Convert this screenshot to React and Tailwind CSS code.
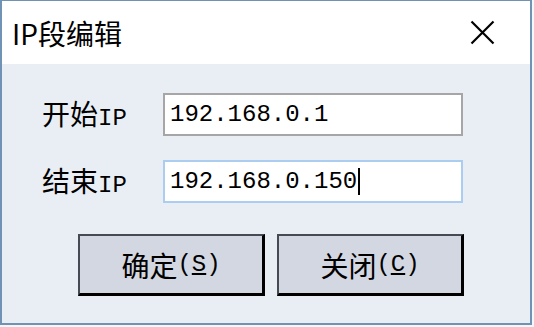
import React from "react";

const cjk = { fontFamily: '"Noto Sans CJK SC", sans-serif' };
const mono = { fontFamily: '"Liberation Mono", "Noto Sans CJK SC", monospace' };

function CloseIcon() {
  return (
    <svg width="25" height="25" viewBox="0 0 25 25" className="text-black">
      <path d="M1.5 1.5 L23.5 23.5 M23.5 1.5 L1.5 23.5" stroke="currentColor" strokeWidth="2.2" fill="none" />
    </svg>
  );
}

function Field({ label, value, active }) {
  return (
    <div className="flex items-center">
      <div className="w-[161px] pl-[40px] flex items-baseline text-black whitespace-nowrap">
        <span className="text-[28px] leading-none" style={cjk}>{label}</span>
        <span className="text-[24px] leading-none" style={mono}>IP</span>
      </div>
      <div
        className={`w-[300px] h-[43px] border-2 bg-white flex items-center pl-[5px] ${
          active ? "border-[#abcdef]" : "border-[#a6a6a6]"
        }`}
      >
        <span className="text-[24px] leading-none text-black" style={mono}>
          {value}
        </span>
        {active && <span className="w-[2px] h-[27px] bg-black ml-[1px]" />}
      </div>
    </div>
  );
}

function Button({ label, hotkey }) {
  return (
    <button className="w-[187px] h-[62px] bg-[#d3d7e1] border-2 border-[#464a52] border-r-[3px] border-b-[3px] border-r-black border-b-black flex items-center justify-center text-black">
      <span className="text-[28px] leading-none" style={cjk}>{label}</span>
      <span className="text-[24px] leading-none" style={mono}>
        (<span className="underline underline-offset-2">{hotkey}</span>)
      </span>
    </button>
  );
}

export default function App() {
  return (
    <div className="w-[534px] h-[327px] bg-[#f4f6f8]">
      <div className="w-[532px] h-[325px] border-[#7093b5] border-l-2 border-t border-r-2 border-b-2 flex flex-col">
        <div className="h-[63px] bg-white flex items-center justify-between pl-[10px] pr-[35px]">
          <span className="text-[28px] text-black leading-none" style={cjk}>IP段编辑</span>
          <CloseIcon />
        </div>
        <div className="flex-1 bg-[#e9eef4] flex flex-col pt-[29px]">
          <Field label="开始" value="192.168.0.1" />
          <div className="h-[24px]" />
          <Field label="结束" value="192.168.0.150" active />
          <div className="flex gap-[12px] pl-[76px] pt-[31px]">
            <Button label="确定" hotkey="S" />
            <Button label="关闭" hotkey="C" />
          </div>
        </div>
      </div>
    </div>
  );
}
